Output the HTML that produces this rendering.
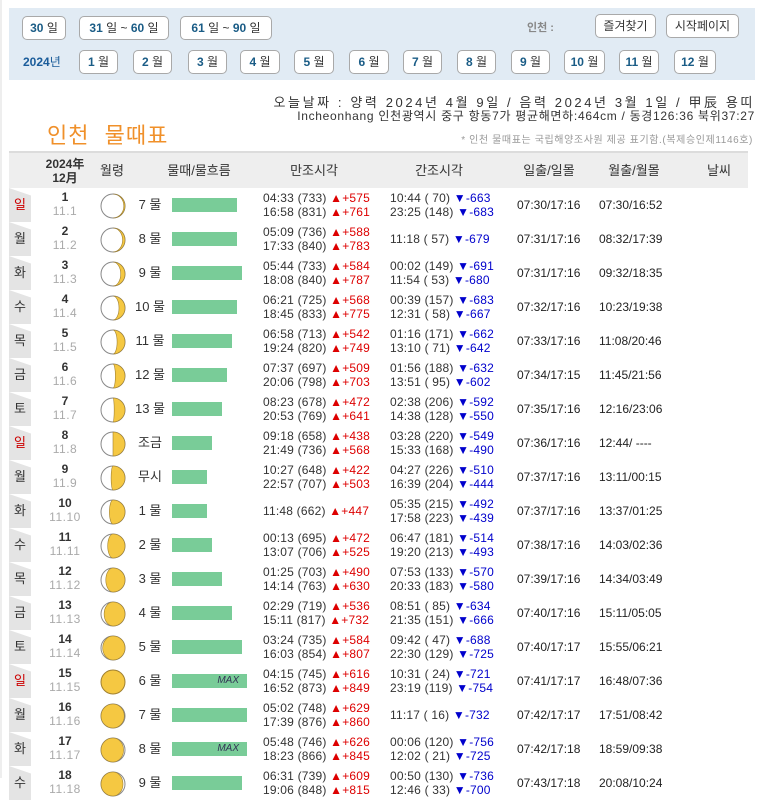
<!DOCTYPE html>
<html><head><meta charset="utf-8"><style>
*{margin:0;padding:0;box-sizing:border-box}
body{width:764px;height:778px;overflow:hidden;background:#fff;font-family:"Liberation Sans","Noto Sans CJK KR",sans-serif;font-size:12px;color:#222;position:relative}
.a{position:absolute;white-space:nowrap}
.panel{position:absolute;left:9px;top:8px;width:746px;height:72px;background:#e1ebf4}
.btn{position:absolute;height:24px;border:1px solid #a9a9a9;border-radius:5px;background:#fff;color:#1a5c86;font-weight:bold;font-size:12px;line-height:22px;text-align:center}
.btn span{font-weight:normal;color:#333}
.btn2{color:#333;font-weight:normal}
.hdr{position:absolute;left:9px;top:151px;width:739px;height:37px;background:#eeeeee;border-top:2px solid #dcdcdc}
.hdr div{position:absolute;top:0;height:35px;line-height:35px;font-size:13px;color:#333;text-align:center}
.row{position:absolute;left:9px;width:739px;height:34px}
.dw{position:absolute;left:0;top:0;width:22px;height:34px;background:#e4e4e4;clip-path:polygon(0 0,100% 22%,100% 100%,0 100%);text-align:center;line-height:34px;font-size:13px;color:#333}
.dw.r{color:#c00}
.dn{position:absolute;left:36px;width:40px;text-align:center;top:3px;font-weight:bold;font-size:12px;color:#333;line-height:13px}
.ds{position:absolute;left:36px;width:40px;text-align:center;top:17px;font-size:12px;color:#aaa;line-height:13px;letter-spacing:.5px}
.mn{position:absolute;left:91px;top:5px}
.tn{position:absolute;left:118px;width:46px;text-align:center;top:0;line-height:34px;font-size:13px;color:#333}
.bar{position:absolute;left:163px;top:10px;height:14px;background:#79cc98}
.bar i{position:absolute;right:8px;top:0;font-size:10px;line-height:14px;color:#335;font-style:italic}
.t{position:absolute;font-size:12px;line-height:14px;color:#333;letter-spacing:.2px}
.t1{left:254px}.t2{left:381px}
.c{top:3px}.s{top:10px}
.u{color:#d00}.d{color:#00c}
.sr{position:absolute;left:508px;top:10px;line-height:14px}
.mr{position:absolute;left:590px;top:10px;line-height:14px}
</style></head><body>
<div class="a" style="left:0;top:0;width:2px;height:778px;background:#eee"></div>
<div class="panel"></div>
<div class="btn" style="left:22px;top:16px;width:44px">30 <span>일</span></div>
<div class="btn" style="left:79px;top:16px;width:90px">31 <span>일 ~</span> 60 <span>일</span></div>
<div class="btn" style="left:180px;top:16px;width:92px">61 <span>일 ~</span> 90 <span>일</span></div>
<div class="a" style="left:527px;top:19px;color:#888;font-weight:bold;font-size:11px">인천 :</div>
<div class="btn btn2" style="left:595px;top:14px;width:61px">즐겨찾기</div>
<div class="btn btn2" style="left:666px;top:14px;width:73px">시작페이지</div>
<div class="a" style="left:23px;top:53px;color:#1a5c9a;font-weight:bold;font-size:12px">2024<span style="font-weight:normal">년</span></div>
<div class="btn" style="left:79px;top:50px;width:39px">1 <span>월</span></div>
<div class="btn" style="left:133px;top:50px;width:39px">2 <span>월</span></div>
<div class="btn" style="left:188px;top:50px;width:39px">3 <span>월</span></div>
<div class="btn" style="left:240px;top:50px;width:40px">4 <span>월</span></div>
<div class="btn" style="left:294px;top:50px;width:40px">5 <span>월</span></div>
<div class="btn" style="left:349px;top:50px;width:40px">6 <span>월</span></div>
<div class="btn" style="left:403px;top:50px;width:39px">7 <span>월</span></div>
<div class="btn" style="left:457px;top:50px;width:39px">8 <span>월</span></div>
<div class="btn" style="left:511px;top:50px;width:39px">9 <span>월</span></div>
<div class="btn" style="left:564px;top:50px;width:41px">10 <span>월</span></div>
<div class="btn" style="left:619px;top:50px;width:40px">11 <span>월</span></div>
<div class="btn" style="left:674px;top:50px;width:42px">12 <span>월</span></div>
<div class="a" style="right:9px;top:92px;font-size:13px;letter-spacing:2.6px;color:#333">오늘날짜 : 양력 2024년 4월 9일 / 음력 2024년 3월 1일 / 甲辰 용띠</div>
<div class="a" style="right:9px;top:107px;font-size:12px;letter-spacing:.7px;color:#333">Incheonhang 인천광역시 중구 항동7가 평균해면하:464cm / 동경126:36 북위37:27</div>
<div class="a" style="left:47px;top:118px;font-size:22px;letter-spacing:1px;word-spacing:8px;color:#f0902a">인천 물때표</div>
<div class="a" style="right:11px;top:131px;font-size:10px;letter-spacing:.6px;color:#999">* 인천 물때표는 국립해양조사원 제공 표기함.(복제승인제1146호)</div>
<div class="hdr">
<div style="left:28px;width:56px;line-height:14px;top:4px;font-weight:bold;font-size:12px">2024年<br>12月</div>
<div style="left:88px;width:30px">월령</div>
<div style="left:150px;width:80px">물때/물흐름</div>
<div style="left:270px;width:70px">만조시각</div>
<div style="left:395px;width:70px">간조시각</div>
<div style="left:505px;width:70px">일출/일몰</div>
<div style="left:590px;width:70px">월출/월몰</div>
<div style="left:690px;width:40px">날씨</div>
</div>

<div class="row" style="top:188px"><div class="dw r">일</div><div class="dn">1</div><div class="ds">11.1</div>
<svg class="mn" width="26" height="26"><circle cx="13" cy="13" r="12" fill="#fff" stroke="#888"/><path d="M13 1A12 12 0 0 1 13 25A10.8 12 0 0 0 13 1Z" fill="#f5c842" stroke="#a08030" stroke-width=".6"/></svg>
<div class="tn">7 물</div><div class="bar" style="width:65px"></div>
<div class="t t1 c">04:33 (733) <span class="u">▲+575</span><br>16:58 (831) <span class="u">▲+761</span></div>
<div class="t t2 c">10:44 ( 70) <span class="d">▼-663</span><br>23:25 (148) <span class="d">▼-683</span></div>
<div class="sr">07:30/17:16</div><div class="mr">07:30/16:52</div></div>

<div class="row" style="top:222px"><div class="dw">월</div><div class="dn">2</div><div class="ds">11.2</div>
<svg class="mn" width="26" height="26"><circle cx="13" cy="13" r="12" fill="#fff" stroke="#888"/><path d="M13 1A12 12 0 0 1 13 25A9.6 12 0 0 0 13 1Z" fill="#f5c842" stroke="#a08030" stroke-width=".6"/></svg>
<div class="tn">8 물</div><div class="bar" style="width:65px"></div>
<div class="t t1 c">05:09 (736) <span class="u">▲+588</span><br>17:33 (840) <span class="u">▲+783</span></div>
<div class="t t2 s">11:18 ( 57) <span class="d">▼-679</span></div>
<div class="sr">07:31/17:16</div><div class="mr">08:32/17:39</div></div>

<div class="row" style="top:256px"><div class="dw">화</div><div class="dn">3</div><div class="ds">11.3</div>
<svg class="mn" width="26" height="26"><circle cx="13" cy="13" r="12" fill="#fff" stroke="#888"/><path d="M13 1A12 12 0 0 1 13 25A7.7 12 0 0 0 13 1Z" fill="#f5c842" stroke="#a08030" stroke-width=".6"/></svg>
<div class="tn">9 물</div><div class="bar" style="width:70px"></div>
<div class="t t1 c">05:44 (733) <span class="u">▲+584</span><br>18:08 (840) <span class="u">▲+787</span></div>
<div class="t t2 c">00:02 (149) <span class="d">▼-691</span><br>11:54 ( 53) <span class="d">▼-680</span></div>
<div class="sr">07:31/17:16</div><div class="mr">09:32/18:35</div></div>

<div class="row" style="top:290px"><div class="dw">수</div><div class="dn">4</div><div class="ds">11.4</div>
<svg class="mn" width="26" height="26"><circle cx="13" cy="13" r="12" fill="#fff" stroke="#888"/><path d="M13 1A12 12 0 0 1 13 25A6 12 0 0 0 13 1Z" fill="#f5c842" stroke="#a08030" stroke-width=".6"/></svg>
<div class="tn">10 물</div><div class="bar" style="width:65px"></div>
<div class="t t1 c">06:21 (725) <span class="u">▲+568</span><br>18:45 (833) <span class="u">▲+775</span></div>
<div class="t t2 c">00:39 (157) <span class="d">▼-683</span><br>12:31 ( 58) <span class="d">▼-667</span></div>
<div class="sr">07:32/17:16</div><div class="mr">10:23/19:38</div></div>

<div class="row" style="top:324px"><div class="dw">목</div><div class="dn">5</div><div class="ds">11.5</div>
<svg class="mn" width="26" height="26"><circle cx="13" cy="13" r="12" fill="#fff" stroke="#888"/><path d="M13 1A12 12 0 0 1 13 25A4.1 12 0 0 0 13 1Z" fill="#f5c842" stroke="#a08030" stroke-width=".6"/></svg>
<div class="tn">11 물</div><div class="bar" style="width:60px"></div>
<div class="t t1 c">06:58 (713) <span class="u">▲+542</span><br>19:24 (820) <span class="u">▲+749</span></div>
<div class="t t2 c">01:16 (171) <span class="d">▼-662</span><br>13:10 ( 71) <span class="d">▼-642</span></div>
<div class="sr">07:33/17:16</div><div class="mr">11:08/20:46</div></div>

<div class="row" style="top:358px"><div class="dw">금</div><div class="dn">6</div><div class="ds">11.6</div>
<svg class="mn" width="26" height="26"><circle cx="13" cy="13" r="12" fill="#fff" stroke="#888"/><path d="M13 1A12 12 0 0 1 13 25A2.4 12 0 0 0 13 1Z" fill="#f5c842" stroke="#a08030" stroke-width=".6"/></svg>
<div class="tn">12 물</div><div class="bar" style="width:55px"></div>
<div class="t t1 c">07:37 (697) <span class="u">▲+509</span><br>20:06 (798) <span class="u">▲+703</span></div>
<div class="t t2 c">01:56 (188) <span class="d">▼-632</span><br>13:51 ( 95) <span class="d">▼-602</span></div>
<div class="sr">07:34/17:15</div><div class="mr">11:45/21:56</div></div>

<div class="row" style="top:392px"><div class="dw">토</div><div class="dn">7</div><div class="ds">11.7</div>
<svg class="mn" width="26" height="26"><circle cx="13" cy="13" r="12" fill="#fff" stroke="#888"/><path d="M13 1A12 12 0 0 1 13 25A1.2 12 0 0 0 13 1Z" fill="#f5c842" stroke="#a08030" stroke-width=".6"/></svg>
<div class="tn">13 물</div><div class="bar" style="width:50px"></div>
<div class="t t1 c">08:23 (678) <span class="u">▲+472</span><br>20:53 (769) <span class="u">▲+641</span></div>
<div class="t t2 c">02:38 (206) <span class="d">▼-592</span><br>14:38 (128) <span class="d">▼-550</span></div>
<div class="sr">07:35/17:16</div><div class="mr">12:16/23:06</div></div>

<div class="row" style="top:426px"><div class="dw r">일</div><div class="dn">8</div><div class="ds">11.8</div>
<svg class="mn" width="26" height="26"><circle cx="13" cy="13" r="12" fill="#fff" stroke="#888"/><path d="M13 1A12 12 0 0 1 13 25Z" fill="#f5c842" stroke="#a08030" stroke-width=".6"/></svg>
<div class="tn">조금</div><div class="bar" style="width:40px"></div>
<div class="t t1 c">09:18 (658) <span class="u">▲+438</span><br>21:49 (736) <span class="u">▲+568</span></div>
<div class="t t2 c">03:28 (220) <span class="d">▼-549</span><br>15:33 (168) <span class="d">▼-490</span></div>
<div class="sr">07:36/17:16</div><div class="mr">12:44/ ----</div></div>

<div class="row" style="top:460px"><div class="dw">월</div><div class="dn">9</div><div class="ds">11.9</div>
<svg class="mn" width="26" height="26"><circle cx="13" cy="13" r="12" fill="#fff" stroke="#888"/><path d="M13 1A12 12 0 0 1 13 25A1.9 12 0 0 1 13 1Z" fill="#f5c842" stroke="#a08030" stroke-width=".6"/></svg>
<div class="tn">무시</div><div class="bar" style="width:35px"></div>
<div class="t t1 c">10:27 (648) <span class="u">▲+422</span><br>22:57 (707) <span class="u">▲+503</span></div>
<div class="t t2 c">04:27 (226) <span class="d">▼-510</span><br>16:39 (204) <span class="d">▼-444</span></div>
<div class="sr">07:37/17:16</div><div class="mr">13:11/00:15</div></div>

<div class="row" style="top:494px"><div class="dw">화</div><div class="dn">10</div><div class="ds">11.10</div>
<svg class="mn" width="26" height="26"><circle cx="13" cy="13" r="12" fill="#fff" stroke="#888"/><path d="M13 1A12 12 0 0 1 13 25A3.6 12 0 0 1 13 1Z" fill="#f5c842" stroke="#a08030" stroke-width=".6"/></svg>
<div class="tn">1 물</div><div class="bar" style="width:35px"></div>
<div class="t t1 s">11:48 (662) <span class="u">▲+447</span></div>
<div class="t t2 c">05:35 (215) <span class="d">▼-492</span><br>17:58 (223) <span class="d">▼-439</span></div>
<div class="sr">07:37/17:16</div><div class="mr">13:37/01:25</div></div>

<div class="row" style="top:528px"><div class="dw">수</div><div class="dn">11</div><div class="ds">11.11</div>
<svg class="mn" width="26" height="26"><circle cx="13" cy="13" r="12" fill="#fff" stroke="#888"/><path d="M13 1A12 12 0 0 1 13 25A5.3 12 0 0 1 13 1Z" fill="#f5c842" stroke="#a08030" stroke-width=".6"/></svg>
<div class="tn">2 물</div><div class="bar" style="width:40px"></div>
<div class="t t1 c">00:13 (695) <span class="u">▲+472</span><br>13:07 (706) <span class="u">▲+525</span></div>
<div class="t t2 c">06:47 (181) <span class="d">▼-514</span><br>19:20 (213) <span class="d">▼-493</span></div>
<div class="sr">07:38/17:16</div><div class="mr">14:03/02:36</div></div>

<div class="row" style="top:562px"><div class="dw">목</div><div class="dn">12</div><div class="ds">11.12</div>
<svg class="mn" width="26" height="26"><circle cx="13" cy="13" r="12" fill="#fff" stroke="#888"/><path d="M13 1A12 12 0 0 1 13 25A7.2 12 0 0 1 13 1Z" fill="#f5c842" stroke="#a08030" stroke-width=".6"/></svg>
<div class="tn">3 물</div><div class="bar" style="width:50px"></div>
<div class="t t1 c">01:25 (703) <span class="u">▲+490</span><br>14:14 (763) <span class="u">▲+630</span></div>
<div class="t t2 c">07:53 (133) <span class="d">▼-570</span><br>20:33 (183) <span class="d">▼-580</span></div>
<div class="sr">07:39/17:16</div><div class="mr">14:34/03:49</div></div>

<div class="row" style="top:596px"><div class="dw">금</div><div class="dn">13</div><div class="ds">11.13</div>
<svg class="mn" width="26" height="26"><circle cx="13" cy="13" r="12" fill="#fff" stroke="#888"/><path d="M13 1A12 12 0 0 1 13 25A8.9 12 0 0 1 13 1Z" fill="#f5c842" stroke="#a08030" stroke-width=".6"/></svg>
<div class="tn">4 물</div><div class="bar" style="width:60px"></div>
<div class="t t1 c">02:29 (719) <span class="u">▲+536</span><br>15:11 (817) <span class="u">▲+732</span></div>
<div class="t t2 c">08:51 ( 85) <span class="d">▼-634</span><br>21:35 (151) <span class="d">▼-666</span></div>
<div class="sr">07:40/17:16</div><div class="mr">15:11/05:05</div></div>

<div class="row" style="top:630px"><div class="dw">토</div><div class="dn">14</div><div class="ds">11.14</div>
<svg class="mn" width="26" height="26"><circle cx="13" cy="13" r="12" fill="#fff" stroke="#888"/><path d="M13 1A12 12 0 0 1 13 25A10.3 12 0 0 1 13 1Z" fill="#f5c842" stroke="#a08030" stroke-width=".6"/></svg>
<div class="tn">5 물</div><div class="bar" style="width:70px"></div>
<div class="t t1 c">03:24 (735) <span class="u">▲+584</span><br>16:03 (854) <span class="u">▲+807</span></div>
<div class="t t2 c">09:42 ( 47) <span class="d">▼-688</span><br>22:30 (129) <span class="d">▼-725</span></div>
<div class="sr">07:40/17:17</div><div class="mr">15:55/06:21</div></div>

<div class="row" style="top:664px"><div class="dw r">일</div><div class="dn">15</div><div class="ds">11.15</div>
<svg class="mn" width="26" height="26"><circle cx="13" cy="13" r="12" fill="#f5c842" stroke="#a08030"/></svg>
<div class="tn">6 물</div><div class="bar" style="width:75px"><i>MAX</i></div>
<div class="t t1 c">04:15 (745) <span class="u">▲+616</span><br>16:52 (873) <span class="u">▲+849</span></div>
<div class="t t2 c">10:31 ( 24) <span class="d">▼-721</span><br>23:19 (119) <span class="d">▼-754</span></div>
<div class="sr">07:41/17:17</div><div class="mr">16:48/07:36</div></div>

<div class="row" style="top:698px"><div class="dw">월</div><div class="dn">16</div><div class="ds">11.16</div>
<svg class="mn" width="26" height="26"><circle cx="13" cy="13" r="12" fill="#fff" stroke="#888"/><path d="M13 1A12 12 0 0 0 13 25A11.3 12 0 0 0 13 1Z" fill="#f5c842" stroke="#a08030" stroke-width=".6"/></svg>
<div class="tn">7 물</div><div class="bar" style="width:75px"></div>
<div class="t t1 c">05:02 (748) <span class="u">▲+629</span><br>17:39 (876) <span class="u">▲+860</span></div>
<div class="t t2 s">11:17 ( 16) <span class="d">▼-732</span></div>
<div class="sr">07:42/17:17</div><div class="mr">17:51/08:42</div></div>

<div class="row" style="top:732px"><div class="dw">화</div><div class="dn">17</div><div class="ds">11.17</div>
<svg class="mn" width="26" height="26"><circle cx="13" cy="13" r="12" fill="#fff" stroke="#888"/><path d="M13 1A12 12 0 0 0 13 25A10.6 12 0 0 0 13 1Z" fill="#f5c842" stroke="#a08030" stroke-width=".6"/></svg>
<div class="tn">8 물</div><div class="bar" style="width:75px"><i>MAX</i></div>
<div class="t t1 c">05:48 (746) <span class="u">▲+626</span><br>18:23 (866) <span class="u">▲+845</span></div>
<div class="t t2 c">00:06 (120) <span class="d">▼-756</span><br>12:02 ( 21) <span class="d">▼-725</span></div>
<div class="sr">07:42/17:18</div><div class="mr">18:59/09:38</div></div>

<div class="row" style="top:766px"><div class="dw">수</div><div class="dn">18</div><div class="ds">11.18</div>
<svg class="mn" width="26" height="26"><circle cx="13" cy="13" r="12" fill="#fff" stroke="#888"/><path d="M13 1A12 12 0 0 0 13 25A10 12 0 0 0 13 1Z" fill="#f5c842" stroke="#a08030" stroke-width=".6"/></svg>
<div class="tn">9 물</div><div class="bar" style="width:70px"></div>
<div class="t t1 c">06:31 (739) <span class="u">▲+609</span><br>19:06 (848) <span class="u">▲+815</span></div>
<div class="t t2 c">00:50 (130) <span class="d">▼-736</span><br>12:46 ( 33) <span class="d">▼-700</span></div>
<div class="sr">07:43/17:18</div><div class="mr">20:08/10:24</div></div>
</body></html>
